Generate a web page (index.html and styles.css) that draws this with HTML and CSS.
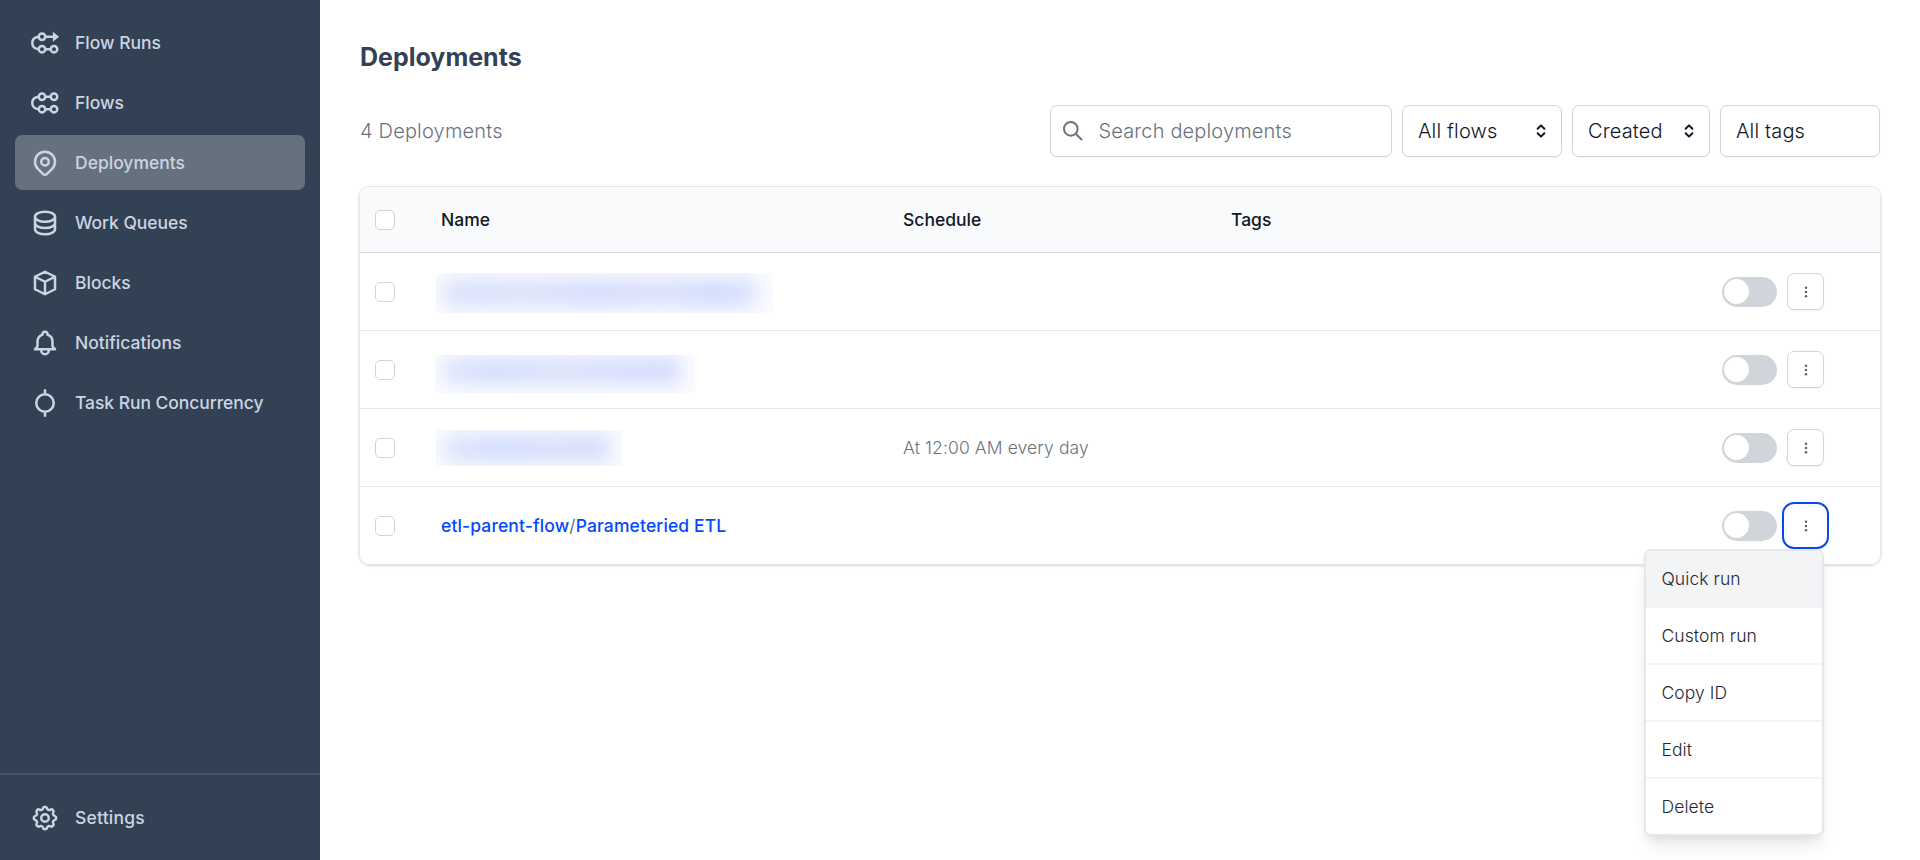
FILE: index.html
```html
<!DOCTYPE html>
<html lang="en">
<head>
<meta charset="utf-8">
<title>Deployments</title>
<link rel="stylesheet" href="styles.css">
</head>
<body>
<div class="app">
  <aside class="sidebar">
    <nav class="nav">
      <a class="nav-item"><svg class="icon" viewBox="0 0 24 24"><path d="M7 7C3.800 7.300 1.800 9.300 1.800 12s2 4.700 5.200 4.900"/><circle cx="9.600" cy="7" r="2.600"/><circle cx="9.600" cy="16.900" r="2.600"/><circle cx="19.200" cy="16.900" r="2.600"/><path d="M12.200 7H19M12.200 16.900h4.400"/><path class="solid" d="M18.300 3v8l5-4z"/></svg><span>Flow Runs</span></a>
      <a class="nav-item"><svg class="icon" viewBox="0 0 24 24"><path d="M7 7C3.800 7.300 1.800 9.300 1.800 12s2 4.700 5.200 4.900"/><circle cx="9.600" cy="7" r="2.600"/><circle cx="19.200" cy="7" r="2.600"/><circle cx="9.600" cy="16.900" r="2.600"/><circle cx="19.200" cy="16.900" r="2.600"/><path d="M12.200 7h4.400M12.200 16.900h4.400"/></svg><span>Flows</span></a>
      <a class="nav-item active"><svg class="icon" viewBox="0 0 24 24"><path d="M17.657 16.657L13.414 20.9a1.998 1.998 0 01-2.827 0l-4.244-4.243a8 8 0 1111.314 0z"/><path d="M15 11a3 3 0 11-6 0 3 3 0 016 0z"/></svg><span>Deployments</span></a>
      <a class="nav-item"><svg class="icon" viewBox="0 0 24 24"><path d="M4 7v10c0 2.210 3.582 4 8 4s8-1.790 8-4V7M4 7c0 2.210 3.582 4 8 4s8-1.790 8-4M4 7c0-2.210 3.582-4 8-4s8 1.790 8 4m0 5c0 2.210-3.582 4-8 4s-8-1.790-8-4"/></svg><span class="tight">Work Queues</span></a>
      <a class="nav-item"><svg class="icon" viewBox="0 0 24 24"><path d="M20 7l-8-4-8 4m16 0l-8 4m8-4v10l-8 4m0-10L4 7m8 4v10M4 7v10l8 4"/></svg><span>Blocks</span></a>
      <a class="nav-item"><svg class="icon" viewBox="0 0 24 24"><path d="M15 17h5l-1.405-1.405A2.032 2.032 0 0118 14.158V11a6.002 6.002 0 00-4-5.659V5a2 2 0 10-4 0v.341C7.670 6.165 6 8.388 6 11v3.159c0 .538-.214 1.055-.595 1.436L4 17h5m6 0v1a3 3 0 11-6 0v-1m6 0H9"/></svg><span>Notifications</span></a>
      <a class="nav-item"><svg class="icon" viewBox="0 0 24 24"><circle cx="12" cy="12" r="7"/><path class="butt" d="M12 1v4M12 19v4"/></svg><span class="tight">Task Run Concurrency</span></a>
    </nav>
    <div class="nav-footer">
      <a class="nav-item"><svg class="icon" viewBox="0 0 24 24"><path d="M10.325 4.317c.426-1.756 2.924-1.756 3.350 0a1.724 1.724 0 002.573 1.066c1.543-.940 3.310.826 2.370 2.370a1.724 1.724 0 001.065 2.572c1.756.426 1.756 2.924 0 3.350a1.724 1.724 0 00-1.066 2.573c.940 1.543-.826 3.310-2.370 2.370a1.724 1.724 0 00-2.572 1.065c-.426 1.756-2.924 1.756-3.350 0a1.724 1.724 0 00-2.573-1.066c-1.543.940-3.310-.826-2.370-2.370a1.724 1.724 0 00-1.065-2.572c-1.756-.426-1.756-2.924 0-3.350a1.724 1.724 0 001.066-2.573c-.940-1.543.826-3.310 2.370-2.370.996.608 2.296.070 2.572-1.065z"/><path d="M15 12a3 3 0 11-6 0 3 3 0 016 0z"/></svg><span class="loose">Settings</span></a>
    </div>
  </aside>

  <main class="main">
    <h1 class="title">Deployments</h1>
    <div class="toolbar">
      <span class="count">4 Deployments</span>
      <div class="filters">
        <div class="field search"><svg class="search-icon" viewBox="0 0 24 24"><path d="M21 21l-6-6m2-5a7 7 0 11-14 0 7 7 0 0114 0z"/></svg><span>Search deployments</span></div>
        <div class="field flows"><span>All flows</span><svg class="chevrons" viewBox="0 0 20 20"><path d="M5.800 7.200L10 3l4.200 4.200M5.800 12.800L10 17l4.200-4.200"/></svg></div>
        <div class="field sort"><span>Created</span><svg class="chevrons" viewBox="0 0 20 20"><path d="M5.800 7.200L10 3l4.200 4.200M5.800 12.800L10 17l4.200-4.200"/></svg></div>
        <div class="field tags"><span>All tags</span></div>
      </div>
    </div>

    <section class="table">
      <div class="row head">
        <span class="checkbox"></span><span>Name</span><span>Schedule</span><span>Tags</span>
      </div>
      <div class="row">
        <span class="checkbox"></span>
        <div class="redacted first"><i></i></div>
        <span></span><span></span>
        <div class="actions"><span class="toggle"></span><button class="more"><svg viewBox="0 0 20 20"><circle cx="10" cy="4" r="1.800"/><circle cx="10" cy="10" r="1.800"/><circle cx="10" cy="16" r="1.800"/></svg></button></div>
      </div>
      <div class="row">
        <span class="checkbox"></span>
        <div class="redacted second"><i></i></div>
        <span></span><span></span>
        <div class="actions"><span class="toggle"></span><button class="more"><svg viewBox="0 0 20 20"><circle cx="10" cy="4" r="1.800"/><circle cx="10" cy="10" r="1.800"/><circle cx="10" cy="16" r="1.800"/></svg></button></div>
      </div>
      <div class="row">
        <span class="checkbox"></span>
        <div class="redacted third"><i></i></div>
        <span class="schedule">At 12:00 AM every day</span><span></span>
        <div class="actions"><span class="toggle"></span><button class="more"><svg viewBox="0 0 20 20"><circle cx="10" cy="4" r="1.800"/><circle cx="10" cy="10" r="1.800"/><circle cx="10" cy="16" r="1.800"/></svg></button></div>
      </div>
      <div class="row">
        <span class="checkbox"></span>
        <span class="name"><a>etl-parent-flow</a>/<a>Parameteried ETL</a></span>
        <span></span><span></span>
        <div class="actions"><span class="toggle"></span><button class="more focused"><svg viewBox="0 0 20 20"><circle cx="10" cy="4" r="1.800"/><circle cx="10" cy="10" r="1.800"/><circle cx="10" cy="16" r="1.800"/></svg></button>
          <div class="menu">
            <div class="menu-item hover">Quick run</div>
            <div class="menu-item">Custom run</div>
            <div class="menu-item">Copy ID</div>
            <div class="menu-item">Edit</div>
            <div class="menu-item">Delete</div>
          </div>
        </div>
      </div>
    </section>
  </main>
</div>
</body>
</html>
```

FILE: styles.css
```css
* { box-sizing: border-box; }

body {
  margin: 0;
  background: #fff;
  font-family: Inter, "Liberation Sans", sans-serif;
  color: #111827;
}

.app { display: flex; height: 860px; overflow: hidden; }

/* Sidebar */
.sidebar {
  display: flex;
  flex-direction: column;
  justify-content: space-between;
  width: 320px;
  flex: none;
  background: #334155;
  color: #cbd5e1;
}
.nav { display: flex; flex-direction: column; gap: 5px; padding: 15px; }
.nav-footer { border-top: 2px solid #475569; padding: 15px; }
.nav-item {
  display: flex;
  align-items: center;
  gap: 15px;
  height: 55px;
  padding: 0 15px;
  border-radius: 7px;
  font-size: 17.5px;
  font-weight: 500;
}
.nav-item.active { background: #66717f; }
.tight { letter-spacing: -.06px; }
.loose { letter-spacing: .2px; }
.icon {
  width: 30px;
  height: 30px;
  flex: none;
  overflow: visible;
  fill: none;
  stroke: currentColor;
  stroke-width: 2;
  stroke-linecap: round;
  stroke-linejoin: round;
}
.icon .butt { stroke-linecap: butt; }
.icon .solid { fill: currentColor; stroke: none; }

/* Page */
.main { flex: 1; padding: 40px 39px 0 39px; }
.title {
  margin: 0 0 30px 1px;
  font-size: 25px;
  line-height: 35px;
  font-weight: 700;
  color: #334155;
}
.toolbar {
  display: flex;
  justify-content: space-between;
  align-items: center;
  height: 52px;
  margin-bottom: 29px;
  padding: 0 1px;
}
.count { font-size: 20px; font-weight: 300; letter-spacing: .18px; color: #6b7280; }
.filters { display: flex; gap: 10px; }
.field {
  display: flex;
  align-items: center;
  justify-content: space-between;
  height: 52px;
  padding: 0 12px 0 15px;
  border: 1px solid #d1d5db;
  border-radius: 7px;
  box-shadow: 0 1px 2px rgba(0, 0, 0, .05);
  font-size: 20px;
  font-weight: 300;
  letter-spacing: .15px;
  background: #fff;
}
.search { width: 342px; justify-content: flex-start; gap: 14px; padding-left: 10px; color: #6b7280; }
.flows { width: 160px; }
.sort { width: 138px; }
.tags { width: 160px; }
.search-icon { width: 23.5px; height: 23.5px; fill: none; stroke: #6b7280; stroke-width: 2; stroke-linecap: round; }
.chevrons { width: 16px; height: 16px; fill: none; stroke: #111827; stroke-width: 2.500; stroke-linecap: round; stroke-linejoin: round; }

/* Table */
.table {
  border: 1px solid #e5e7eb;
  border-radius: 10px;
  box-shadow: 0 1px 3px rgba(0, 0, 0, .1), 0 1px 2px rgba(0, 0, 0, .06);
}
.row {
  display: grid;
  grid-template-columns: 66px 462px 328px 1fr 170px;
  align-items: center;
  height: 78px;
  padding-left: 15px;
  border-bottom: 1px solid #e5e7eb;
  font-size: 17.5px;
}
.row:last-child { height: 77px; border-bottom: 0; }
.row.head {
  height: 66px;
  background: #f9fafb;
  border-bottom-color: #d1d5db;
  border-radius: 10px 10px 0 0;
  font-weight: 500;
}
.checkbox { width: 20px; height: 20px; border: 1px solid #d1d5db; border-radius: 5px; background: #fff; }
.schedule { font-weight: 300; letter-spacing: .12px; color: #6b7280; }
.name { letter-spacing: .12px; color: #6b7280; }
.name a { color: #0549ff; font-weight: 500; }

.redacted { overflow: hidden; background: #fafbff; margin-left: -5px; }
.redacted i {
  display: block;
  border-radius: 8px;
  filter: blur(9px);
}
.first { width: 337px; height: 40px; margin-top: 3px; }
.first i { margin: 6px 16px 6px 7px; height: 28px; background: linear-gradient(90deg, #dde3fc, #d9e1fb 12%, #dde3fb 25%, #d6ddfd 50%, #dbe1fa 70%, #d0dcfe 88%, #dde4fa); }
.second { width: 260px; height: 38px; margin: 9px 0 0 -6px; }
.second i { margin: 2px 15px 0 8px; height: 27px; background: linear-gradient(90deg, #dfe5fc, #d3ddfd 22%, #dbe2fa 50%, #d6ddfe 75%, #d4dcfb); }
.third { width: 186px; height: 36px; }
.third i { margin: 5px 12px 0 8px; height: 27px; background: linear-gradient(90deg, #dfe5fb, #d2ddfd 35%, #d9e0fa 65%, #d5ddfa); }

.actions { display: flex; align-items: center; gap: 10px; position: relative; padding-left: 12px; }
.toggle { display: flex; width: 55px; height: 30px; padding: 2px; border-radius: 15px; background: #d1d5db; }
.toggle::before { content: ""; width: 25px; height: 25px; border-radius: 50%; background: #fff; }
.more {
  display: flex;
  align-items: center;
  justify-content: center;
  width: 37px;
  height: 37px;
  padding: 0;
  border: 1px solid #d1d5db;
  border-radius: 7px;
  background: #fff;
  box-shadow: 0 1px 2px rgba(0, 0, 0, .05);
}
.more svg { width: 14px; height: 14px; fill: #5b6472; }
.more.focused { border-color: #fff; box-shadow: 0 0 0 3px #fff, 0 0 0 5px #0549ea; }

.menu {
  position: absolute;
  top: 42px;
  left: -66px;
  width: 180px;
  border: 2px solid #e5e7eb;
  border-radius: 7px;
  background: #fff;
  box-shadow: 0 12px 18px -4px rgba(0, 0, 0, .1), 0 5px 7px -2px rgba(0, 0, 0, .05);
  overflow: hidden;
}
.menu-item {
  height: 57px;
  padding-left: 15.5px;
  border-bottom: 2px solid #f3f4f6;
  font-size: 17.5px;
  line-height: 56px;
  font-weight: 300;
  letter-spacing: .08px;
  color: #1f2937;
}
.menu-item:last-child { height: 55px; border-bottom: 0; }
.menu-item.hover { background: #f3f4f6; }
```
